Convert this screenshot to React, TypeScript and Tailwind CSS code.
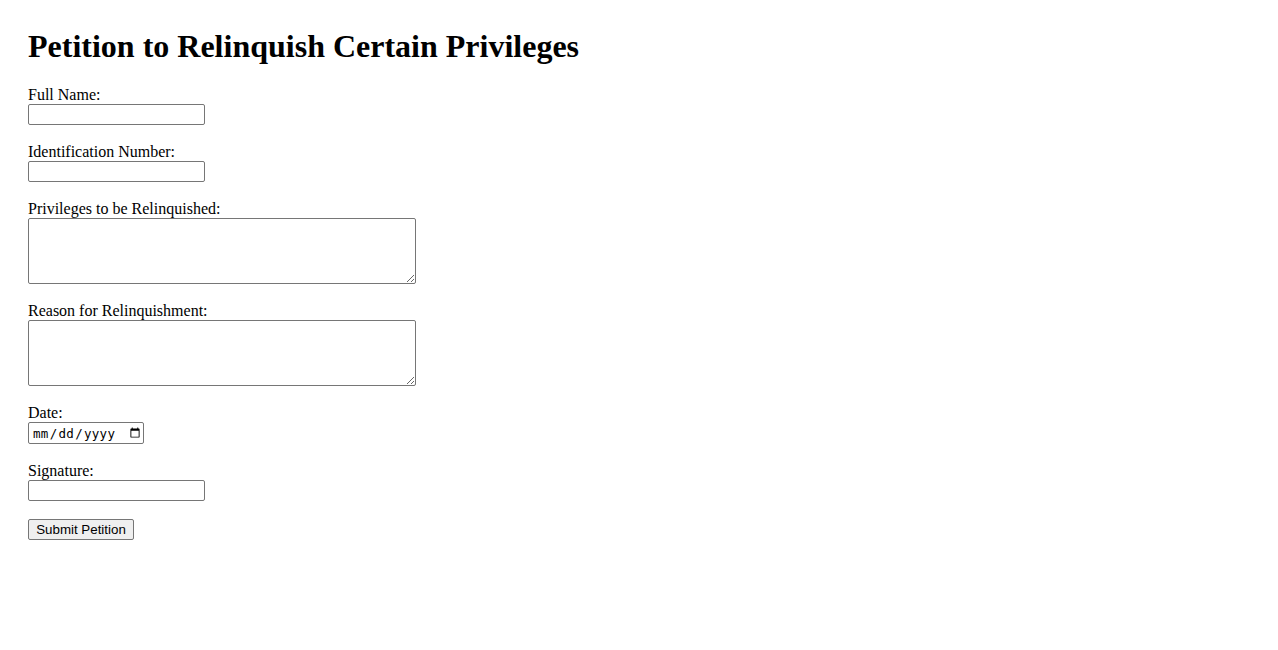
import type { ReactNode } from "react";

const inputCls =
  "block w-[177px] h-[21px] border border-[#767676] rounded-[2px] px-[2px] py-[1px] bg-white text-[13.33px] font-['Liberation_Sans',Arial,sans-serif]";

const areaCls =
  "block w-[388px] h-[66px] border border-[#767676] rounded-[2px] p-[2px] bg-white text-[13.33px] font-['Liberation_Mono',monospace] resize";

function Field({ label, htmlFor, children }: { label: string; htmlFor: string; children: ReactNode }) {
  return (
    <div className="mb-[18px]">
      <label htmlFor={htmlFor} className="block leading-[18px]">
        {label}
      </label>
      {children}
    </div>
  );
}

export default function App() {
  return (
    <div className="min-h-[650px] bg-white p-7 text-black text-[16px] leading-[normal] font-['Liberation_Serif','Times_New_Roman',serif]">
      <h1 className="text-[32px] font-bold leading-[37px] mb-[21px]">
        Petition to Relinquish Certain Privileges
      </h1>

      <form onSubmit={(e) => e.preventDefault()}>
        <Field label="Full Name:" htmlFor="name">
          <input id="name" type="text" className={inputCls} />
        </Field>

        <Field label="Identification Number:" htmlFor="idnum">
          <input id="idnum" type="text" className={inputCls} />
        </Field>

        <Field label="Privileges to be Relinquished:" htmlFor="privileges">
          <textarea id="privileges" className={areaCls} />
        </Field>

        <Field label="Reason for Relinquishment:" htmlFor="reason">
          <textarea id="reason" className={areaCls} />
        </Field>

        <Field label="Date:" htmlFor="date">
          <input
            id="date"
            type="date"
            className="block w-[116px] h-[22px] border border-[#767676] rounded-[2px] pl-[3px] pr-0 bg-white text-[12.5px] tracking-[0.3px] font-['DejaVu_Sans_Mono',monospace]"
          />
        </Field>

        <Field label="Signature:" htmlFor="signature">
          <input id="signature" type="text" className={inputCls} />
        </Field>

        <button
          type="submit"
          className="block w-[106px] h-[21px] bg-[#efefef] border border-[#767676] rounded-[2px] text-[13.33px] leading-none font-['Liberation_Sans',Arial,sans-serif]"
        >
          Submit Petition
        </button>
      </form>
    </div>
  );
}
